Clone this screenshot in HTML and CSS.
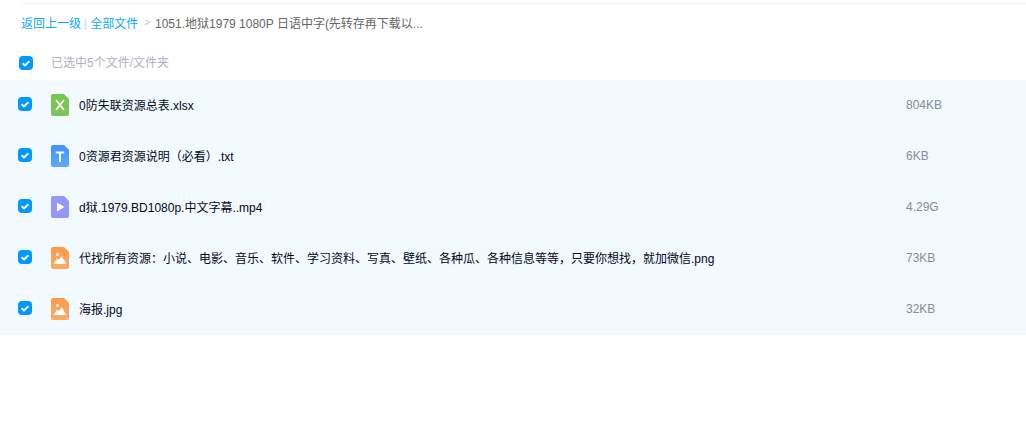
FILE: index.html
```html
<!DOCTYPE html>
<html lang="zh-CN">
<head>
  <meta charset="UTF-8">
  <title>全部文件</title>
  <link rel="stylesheet" href="styles.css">
</head>
<body>
  <div class="top-line"></div>
  <div class="crumbs">
    <a class="link">返回上一级</a>
    <span class="sep">|</span>
    <a class="link">全部文件</a>
    <span class="arrow">&gt;</span>
    <span class="path">1051.地狱1979 1080P 日语中字(先转存再下载以...</span>
  </div>
  <div class="select-bar">
    <svg class="check" viewBox="0 0 14 14"><use href="#check"/></svg>
    <span class="select-text">已选中5个文件/文件夹</span>
  </div>

  <ul class="files">
    <li class="file">
      <svg class="check" viewBox="0 0 14 14"><use href="#check"/></svg>
      <svg class="icon" viewBox="0 0 18 22">
        <path fill="url(#green)" d="M2 0h11l5 5v15a2 2 0 0 1-2 2H2a2 2 0 0 1-2-2V2a2 2 0 0 1 2-2z"/>
        <path stroke="#fff" stroke-width="1.7" fill="none" d="M5 6l8 10M13 6l-8 10"/>
      </svg>
      <span class="name">0防失联资源总表.xlsx</span>
      <span class="size">804KB</span>
    </li>
    <li class="file">
      <svg class="check" viewBox="0 0 14 14"><use href="#check"/></svg>
      <svg class="icon" viewBox="0 0 18 22">
        <path fill="url(#blue)" d="M2 0h11l5 5v15a2 2 0 0 1-2 2H2a2 2 0 0 1-2-2V2a2 2 0 0 1 2-2z"/>
        <path stroke="#fff" stroke-width="1.9" fill="none" d="M4.8 7.5h8.4M9 7.5v9.5"/>
      </svg>
      <span class="name">0资源君资源说明（必看）.txt</span>
      <span class="size">6KB</span>
    </li>
    <li class="file">
      <svg class="check" viewBox="0 0 14 14"><use href="#check"/></svg>
      <svg class="icon" viewBox="0 0 18 22">
        <path fill="#9497fb" d="M2 0h11l5 5v15a2 2 0 0 1-2 2H2a2 2 0 0 1-2-2V2a2 2 0 0 1 2-2z"/>
        <path fill="#fff" d="M6 6.5l7.5 4.5-7.5 4.5z"/>
      </svg>
      <span class="name">d狱.1979.BD1080p.中文字幕..mp4</span>
      <span class="size">4.29G</span>
    </li>
    <li class="file">
      <svg class="check" viewBox="0 0 14 14"><use href="#check"/></svg>
      <svg class="icon" viewBox="0 0 18 22"><use href="#pic"/></svg>
      <span class="name">代找所有资源：小说、电影、音乐、软件、学习资料、写真、壁纸、各种瓜、各种信息等等，只要你想找，就加微信.png</span>
      <span class="size">73KB</span>
    </li>
    <li class="file">
      <svg class="check" viewBox="0 0 14 14"><use href="#check"/></svg>
      <svg class="icon" viewBox="0 0 18 22"><use href="#pic"/></svg>
      <span class="name">海报.jpg</span>
      <span class="size">32KB</span>
    </li>
  </ul>

  <svg class="defs" width="0" height="0">
    <linearGradient id="green" x1="0" y1="0" x2="0" y2="1">
      <stop offset="0" stop-color="#74c94e"/>
      <stop offset="1" stop-color="#7fc35c"/>
    </linearGradient>
    <linearGradient id="blue" x1="0" y1="0" x2="0" y2="1">
      <stop offset="0" stop-color="#3f94fb"/>
      <stop offset="1" stop-color="#5fa9fb"/>
    </linearGradient>
    <linearGradient id="orange" x1="0" y1="0" x2="0" y2="1">
      <stop offset="0" stop-color="#fd9a4c"/>
      <stop offset="1" stop-color="#fdaa66"/>
    </linearGradient>
    <symbol id="check" viewBox="0 0 14 14">
      <rect width="14" height="14" rx="4" fill="#09f"/>
      <path d="M3.6 7.2l2.4 2.2 4.4-4.2" fill="none" stroke="#fff" stroke-width="2"/>
    </symbol>
    <symbol id="pic" viewBox="0 0 18 22">
      <path fill="url(#orange)" d="M2 0h11l5 5v15a2 2 0 0 1-2 2H2a2 2 0 0 1-2-2V2a2 2 0 0 1 2-2z"/>
      <circle cx="6.5" cy="7.5" r="1.4" fill="#fff"/>
      <path fill="#fff" d="M2.5 17l3.5-5.5 2 1.5 2.5-4 5 8z"/>
    </symbol>
  </svg>
</body>
</html>
```

FILE: styles.css
```css
* {
  box-sizing: border-box;
}

body {
  margin: 0;
  height: 436px;
  overflow: hidden;
  background: #fff;
  font-family: "Liberation Sans", "Noto Sans CJK SC", sans-serif;
  font-size: 12px;
  color: #03081a;
}

.top-line {
  height: 4px;
  margin-left: 22px;
  border-bottom: 1px solid #f2f2f2;
}

.crumbs {
  display: flex;
  align-items: center;
  height: 37px;
  padding-left: 21px;
  white-space: nowrap;
}

.link {
  color: #09aaff;
}

.sep {
  margin: 0 3px;
  color: #c4d8ea;
}

.arrow {
  margin: 0 5px 0 6px;
  color: #c5cbd6;
  font-size: 10px;
}

.path {
  color: #666;
}

.select-bar {
  display: flex;
  align-items: center;
  height: 39px;
  padding-top: 3px;
  padding-left: 19px;
}

.select-bar .check {
  margin-top: 2px;
  margin-right: 19px;
}

.select-text {
  margin-left: -1px;
  margin-bottom: 2px;
  color: #afb3bf;
}

.check {
  flex: none;
  width: 14px;
  height: 14px;
}

.files {
  margin: 0;
  padding: 0;
  list-style: none;
  background: #f2f9ff;
}

.file {
  display: flex;
  align-items: center;
  height: 51px;
  padding-left: 18px;
  white-space: nowrap;
}

.file .check {
  margin-bottom: 3px;
}

.icon {
  flex: none;
  width: 18px;
  height: 22px;
  margin: 0 10px 1px 19px;
}

.name {
  flex: 1;
  margin-bottom: 2px;
}

.size {
  width: 120px;
  margin-bottom: 2px;
  color: #878c9c;
}

.defs {
  position: absolute;
}
```
